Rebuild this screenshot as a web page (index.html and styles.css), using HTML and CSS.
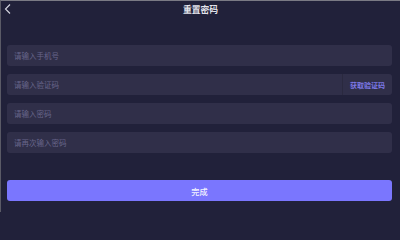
FILE: index.html
```html
<!DOCTYPE html>
<html lang="zh">
<head>
<meta charset="utf-8">
<title>重置密码</title>
<link rel="stylesheet" href="styles.css">
</head>
<body>
<div class="screen">
  <header class="topbar">
    <span class="back">
      <svg width="12" height="16" viewBox="0 0 12 16"><path d="M9 3.5 L4.5 8 L9 12.5" fill="none" stroke="#d8d8e2" stroke-width="1.1"/></svg>
    </span>
    <h1 class="title">重置密码</h1>
  </header>
  <form class="form">
    <div class="field"><span class="ph">请输入手机号</span></div>
    <div class="field field-code"><span class="ph">请输入验证码</span><span class="code-btn">获取验证码</span></div>
    <div class="field"><span class="ph">请输入密码</span></div>
    <div class="field"><span class="ph">请再次输入密码</span></div>
  </form>
  <div class="actions">
    <button type="button" class="submit">完成</button>
  </div>
</div>
</body>
</html>
```
FILE: styles.css
```css
html, body {
  margin: 0;
  padding: 0;
  background: #21213a;
}
body {
  width: 400px;
  height: 212px;
  overflow: hidden;
  font-family: "Noto Sans CJK SC", "Noto Sans", sans-serif;
}
.screen {
  box-sizing: border-box;
  width: 400px;
  height: 212px;
  background: #21213a;
  border-top: 1px solid #7a7a84;
  border-left: 1px solid #5a5a66;
  display: flex;
  flex-direction: column;
}
.topbar {
  position: relative;
  height: 16px;
  display: flex;
  align-items: center;
  justify-content: center;
}
.back {
  position: absolute;
  left: 0;
  top: 0;
  width: 12px;
  height: 16px;
}
.back svg { display: block; }
.title {
  margin: 0;
  font-size: 8.8px;
  font-weight: 700;
  color: #e4e4ec;
  line-height: 15px;
}
.form {
  margin: 28px 0 0 0;
  padding: 0 8px 0 6px;
  display: flex;
  flex-direction: column;
  gap: 8px;
}
.field {
  height: 21px;
  border-radius: 3px;
  background: #302f49;
  display: flex;
  align-items: center;
  padding-left: 7px;
}
.ph {
  flex: 1;
  font-size: 7.5px;
  color: #68668b;
}
.code-btn {
  height: 100%;
  display: flex;
  align-items: center;
  padding: 0 7px 0 7px;
  border-left: 1px solid #2a293f;
  font-size: 7px;
  font-weight: 700;
  color: #7c78e6;
}
.actions {
  margin-top: 27px;
  padding: 0 8px 0 6px;
}
.submit {
  display: block;
  width: 100%;
  height: 21px;
  border: none;
  border-radius: 3px;
  background: #7a76fe;
  color: #f4f4ff;
  font-family: "Noto Sans CJK SC", "Noto Sans", sans-serif;
  font-size: 8.2px;
  font-weight: 500;
  padding: 0;
}
```
